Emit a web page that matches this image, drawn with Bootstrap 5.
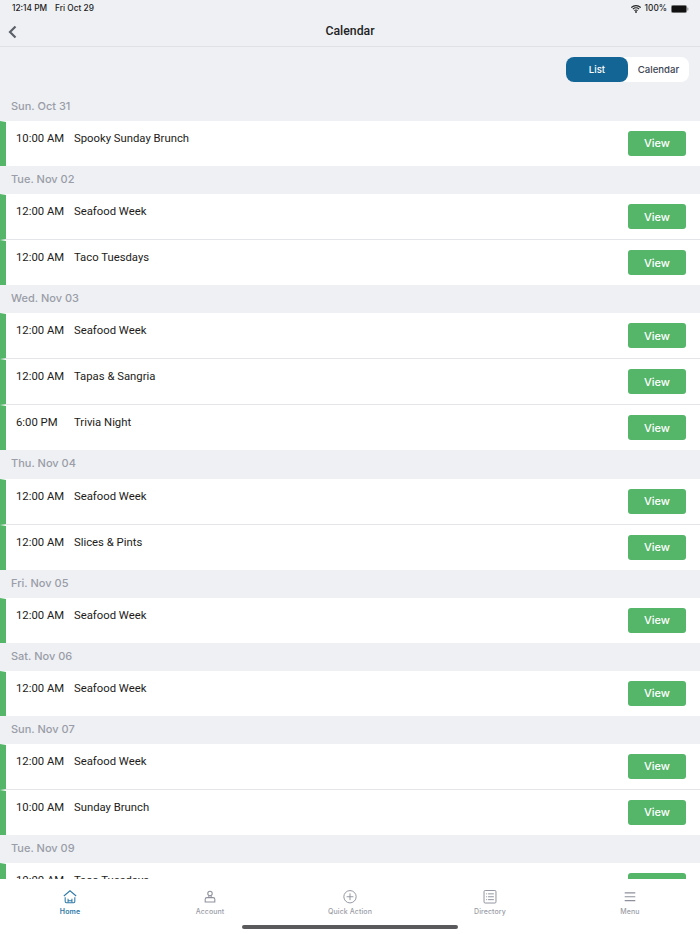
<!DOCTYPE html>
<html lang="en">
<head>
  <meta charset="UTF-8">
  <title>Calendar</title>
  <link rel="stylesheet" href="https://cdn.jsdelivr.net/npm/bootstrap@5.3.0/dist/css/bootstrap.min.css">
  <style>
    html, body { height: 934px; overflow: hidden; }
    body { background: #eef0f4; font-family: Inter, "Liberation Sans", sans-serif; color: #1c1c20; }
    .app-shell { height: 934px; }
    .status-bar { height: 17px; flex: none; padding: 0 11px 0 12px; font-size: 8.3px; font-weight: 500; color: #222; }
    .status-bar svg { display: block; }
    .top-nav { height: 30px; flex: none; border-bottom: 1.5px solid #dfe1e5; padding: 0 8px; }
    .top-title { font-family: Roboto, sans-serif; font-size: 12.3px; font-weight: 500; color: #1f1f24; }
    .back-slot { width: 60px; }
    .list-wrap { min-height: 0; overflow: hidden; }
    .toggle-row { height: 46px; padding: 10px 11px 0 0; }
    .seg-group { width: 123px; height: 25px; background: #fff; border-radius: 8px; }
    .seg-item { font-size: 9.6px; font-weight: 500; border: 0; padding: 1px 0 0; background: transparent; color: #3d4452; }
    .seg-on { width: 62px; background: #136595; color: #fff; border-radius: 8px; }
    .seg-off { width: 61px; }
    .day-head { height: 28.15px; padding-left: 11px; font-size: 11px; font-weight: 500; color: #9a9da7; line-height: 26px; }
    .event-row { height: 46px; background: #fff; border-top: 1px solid #fff; border-left: 6px solid #55b569; border-bottom: 1px solid #e4e5e8; padding: 0 14px 0 10px; }
    .event-row.last-row { height: 45px; border-bottom: 0; }
    .ev-time { width: 58px; font-family: Roboto, sans-serif; font-size: 11.3px; line-height: 14px; padding-top: 10px; flex: none; }
    .ev-name { font-family: Roboto, sans-serif; font-size: 11.3px; line-height: 14px; padding-top: 10px; }
    .view-btn { width: 58px; height: 25px; padding: 0; border: 0; border-radius: 3px; background: #55b569; color: #fff; font-size: 11px; font-weight: 500; margin-top: 9px; }
    .tab-bar { height: 55px; background: #fff; flex: none; }
    .tab-cell { width: 140px; height: 38px; color: #9a9da7; font-size: 7px; font-weight: 500; letter-spacing: .1px; padding-top: 11px; }
    .tab-cell svg { display: block; margin-bottom: 3px; }
    .tab-home { color: #2f7aa8; font-weight: 600; }
    .home-bar { width: 216px; height: 4px; background: #5a5a5c; border-radius: 2px; margin: 8px auto 0; }
  </style>
</head>
<body>
<div class="app-shell d-flex flex-column">

  <div class="status-bar d-flex align-items-center justify-content-between">
    <div class="d-flex gap-2"><span>12:14 PM</span><span>Fri Oct 29</span></div>
    <div class="d-flex align-items-center gap-1">
      <svg width="10" height="8" viewBox="0 0 10 8"><path d="M0.3 2.6a6.7 6.7 0 0 1 9.4 0M1.9 4.2a4.4 4.4 0 0 1 6.2 0M3.4 5.7a2.2 2.2 0 0 1 3.2 0" fill="none" stroke="#222" stroke-width="1.1"/><circle cx="5" cy="7" r="0.9" fill="#222"/></svg>
      <span>100%</span>
      <svg width="18" height="8" viewBox="0 0 18 8"><rect x="0.3" y="0.3" width="15.4" height="7.4" rx="1.6" fill="#111" stroke="#999" stroke-width="0.6"/><rect x="16.2" y="2.6" width="1.2" height="2.8" rx="0.5" fill="#999"/></svg>
    </div>
  </div>

  <div class="top-nav d-flex align-items-center">
    <div class="back-slot">
      <svg class="d-block" width="10" height="14" viewBox="0 0 10 14"><path d="M7.5 1.5 2 7l5.5 5.5" fill="none" stroke="#5d6068" stroke-width="2.2"/></svg>
    </div>
    <div class="top-title flex-grow-1 text-center">Calendar</div>
    <div class="back-slot"></div>
  </div>

  <div class="list-wrap flex-grow-1">
    <div class="toggle-row d-flex justify-content-end">
      <div class="seg-group d-flex">
        <button class="seg-item seg-on">List</button>
        <button class="seg-item seg-off">Calendar</button>
      </div>
    </div>

    <div class="day-head">Sun. Oct 31</div>
    <div class="event-row last-row d-flex justify-content-between">
      <div class="d-flex"><div class="ev-time">10:00 AM</div><div class="ev-name">Spooky Sunday Brunch</div></div>
      <button class="view-btn">View</button>
    </div>

    <div class="day-head">Tue. Nov 02</div>
    <div class="event-row d-flex justify-content-between">
      <div class="d-flex"><div class="ev-time">12:00 AM</div><div class="ev-name">Seafood Week</div></div>
      <button class="view-btn">View</button>
    </div>
    <div class="event-row last-row d-flex justify-content-between">
      <div class="d-flex"><div class="ev-time">12:00 AM</div><div class="ev-name">Taco Tuesdays</div></div>
      <button class="view-btn">View</button>
    </div>

    <div class="day-head">Wed. Nov 03</div>
    <div class="event-row d-flex justify-content-between">
      <div class="d-flex"><div class="ev-time">12:00 AM</div><div class="ev-name">Seafood Week</div></div>
      <button class="view-btn">View</button>
    </div>
    <div class="event-row d-flex justify-content-between">
      <div class="d-flex"><div class="ev-time">12:00 AM</div><div class="ev-name">Tapas &amp; Sangria</div></div>
      <button class="view-btn">View</button>
    </div>
    <div class="event-row last-row d-flex justify-content-between">
      <div class="d-flex"><div class="ev-time">6:00 PM</div><div class="ev-name">Trivia Night</div></div>
      <button class="view-btn">View</button>
    </div>

    <div class="day-head">Thu. Nov 04</div>
    <div class="event-row d-flex justify-content-between">
      <div class="d-flex"><div class="ev-time">12:00 AM</div><div class="ev-name">Seafood Week</div></div>
      <button class="view-btn">View</button>
    </div>
    <div class="event-row last-row d-flex justify-content-between">
      <div class="d-flex"><div class="ev-time">12:00 AM</div><div class="ev-name">Slices &amp; Pints</div></div>
      <button class="view-btn">View</button>
    </div>

    <div class="day-head">Fri. Nov 05</div>
    <div class="event-row last-row d-flex justify-content-between">
      <div class="d-flex"><div class="ev-time">12:00 AM</div><div class="ev-name">Seafood Week</div></div>
      <button class="view-btn">View</button>
    </div>

    <div class="day-head">Sat. Nov 06</div>
    <div class="event-row last-row d-flex justify-content-between">
      <div class="d-flex"><div class="ev-time">12:00 AM</div><div class="ev-name">Seafood Week</div></div>
      <button class="view-btn">View</button>
    </div>

    <div class="day-head">Sun. Nov 07</div>
    <div class="event-row d-flex justify-content-between">
      <div class="d-flex"><div class="ev-time">12:00 AM</div><div class="ev-name">Seafood Week</div></div>
      <button class="view-btn">View</button>
    </div>
    <div class="event-row last-row d-flex justify-content-between">
      <div class="d-flex"><div class="ev-time">10:00 AM</div><div class="ev-name">Sunday Brunch</div></div>
      <button class="view-btn">View</button>
    </div>

    <div class="day-head">Tue. Nov 09</div>
    <div class="event-row last-row d-flex justify-content-between">
      <div class="d-flex"><div class="ev-time">10:00 AM</div><div class="ev-name">Taco Tuesdays</div></div>
      <button class="view-btn">View</button>
    </div>
  </div>

  <div class="tab-bar">
    <div class="d-flex">
      <div class="tab-cell tab-home d-flex flex-column align-items-center">
        <svg width="14" height="14" viewBox="0 0 14 14" fill="none" stroke="#2f7aa8" stroke-width="1.1"><path d="M0.6 6.2 7 0.8l6.4 5.4"/><path d="M2 7.5v4.5q0 1.2 1.2 1.2h7.6q1.2 0 1.2-1.2V7.5"/><path d="M5 9v4M9 9v4M5 11.2h4"/></svg>
        <span>Home</span>
      </div>
      <div class="tab-cell d-flex flex-column align-items-center">
        <svg width="14" height="14" viewBox="0 0 14 14" fill="none" stroke="#8e919c" stroke-width="1.1"><circle cx="7" cy="3.6" r="2.3"/><path d="M5.8 6v1.8M8.2 6v1.8"/><path d="M2 12.5V9.700c0-1 .8-1.800 1.800-1.800h6.400c1 0 1.800.8 1.800 1.800v2.800z"/></svg>
        <span>Account</span>
      </div>
      <div class="tab-cell d-flex flex-column align-items-center">
        <svg width="16" height="14" viewBox="0 0 16 16" fill="none" stroke="#8e919c" stroke-width="1.1"><circle cx="8" cy="8" r="7.3"/><path d="M8 4v8M4 8h8"/></svg>
        <span>Quick Action</span>
      </div>
      <div class="tab-cell d-flex flex-column align-items-center">
        <svg width="14" height="14" viewBox="0 0 14 14" fill="none" stroke="#8e919c" stroke-width="1"><rect x="0.8" y="0.5" width="12.4" height="13" rx="1.2"/><path d="M5 4h6M5 7h6M5 10h6M3 4h1M3 7h1M3 10h1"/></svg>
        <span>Directory</span>
      </div>
      <div class="tab-cell d-flex flex-column align-items-center">
        <svg width="14" height="14" viewBox="0 0 14 14" fill="none" stroke="#8e919c" stroke-width="1.1"><path d="M1.5 3h11M1.5 7h11M1.5 11h11"/></svg>
        <span>Menu</span>
      </div>
    </div>
    <div class="home-bar"></div>
  </div>
</div>
<script src="https://cdn.jsdelivr.net/npm/bootstrap@5.3.0/dist/js/bootstrap.bundle.min.js"></script>
</body>
</html>
